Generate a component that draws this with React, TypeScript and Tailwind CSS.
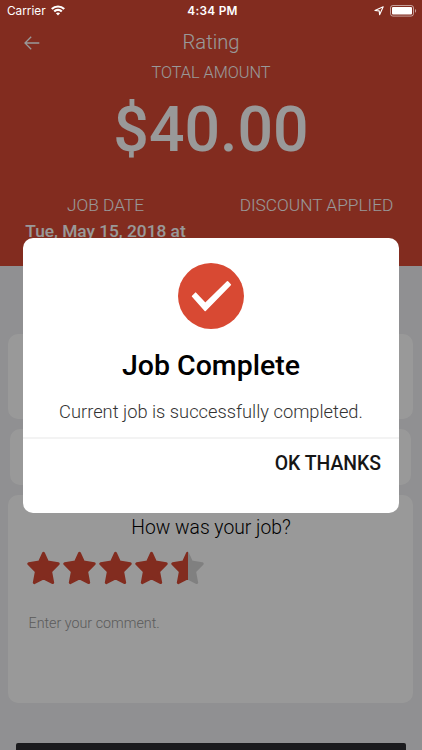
const STAR =
  "M16.5 2.2 L20.6 11 L31.3 12.7 L23.7 20.6 L25.8 31.7 L16.5 27 L7.2 31.7 L9.3 20.6 L1.7 12.7 L12.4 11 Z";

function Star({ fill }: { fill: "full" | "half" }) {
  return (
    <svg width="33" height="34" viewBox="0 0 33 34" className="shrink-0">
      <defs>
        <linearGradient id="half-star" gradientUnits="userSpaceOnUse" x1="0" y1="0" x2="33" y2="0">
          <stop offset="0.5" stopColor="#d94a35" />
          <stop offset="0.5" stopColor="#d6d6d6" />
        </linearGradient>
      </defs>
      <path
        d={STAR}
        fill={fill === "full" ? "#d94a35" : "url(#half-star)"}
        stroke={fill === "full" ? "#d94a35" : "url(#half-star)"}
        strokeWidth="2.8"
        strokeLinejoin="round"
      />
    </svg>
  );
}

function StatusBar() {
  return (
    <div className="absolute inset-x-0 top-0 z-20 grid h-[22px] grid-cols-3 items-center text-white">
      <div className="flex items-center gap-[5px] pt-px pl-[7px] font-['Inter','Liberation_Sans',sans-serif] text-[11.8px]">
        <span>Carrier</span>
        <svg width="14" height="11" viewBox="0 0 14 11" className="-mt-[2px]" fill="none" stroke="white" strokeWidth="2.2">
          <path d="M0.8 4.1 C4.2 0.6 9.8 0.6 13.2 4.1" />
          <path d="M3.2 6.5 C5.3 4.4 8.7 4.4 10.8 6.5" />
          <path d="M4.9 8.2 C6.1 7.1 7.9 7.1 9.1 8.2 L7 10.4 Z" fill="white" stroke="none" />
        </svg>
      </div>
      <div className="pt-px pl-[3px] text-center font-['Inter','Liberation_Sans',sans-serif] text-[11.8px] font-semibold tracking-[0.3px] whitespace-nowrap">
        4:34 PM
      </div>
      <div className="flex items-center justify-end gap-[6px] pr-[5px]">
        <svg width="10" height="10" viewBox="0 0 10 10" fill="none" stroke="white" strokeWidth="1.1" strokeLinejoin="round">
          <path d="M9.2 0.7 L5.6 8.8 L5.2 4.9 L0.9 4.5 Z" />
        </svg>
        <svg width="27" height="12" viewBox="0 0 27 12">
          <rect x="0.5" y="0.5" width="23" height="10.6" rx="2.4" fill="none" stroke="white" strokeOpacity="0.55" />
          <rect x="2" y="2" width="20" height="7.6" rx="1" fill="white" />
          <path d="M25 4 C26.5 4.5 26.5 7.2 25 7.7 Z" fill="white" fillOpacity="0.55" />
        </svg>
      </div>
    </div>
  );
}

function Header() {
  return (
    <header className="flex h-[266px] shrink-0 flex-col bg-[#d94a35] pt-[22px] text-white">
      <div className="grid h-[41px] grid-cols-[1fr_auto_1fr] items-center">
        <svg width="16" height="14" viewBox="0 0 16 14" className="ml-[24px]" fill="none" stroke="white" strokeWidth="1.3">
          <path d="M15.3 7 H1 M7.2 0.8 L1 7 L7.2 13.2" />
        </svg>
        <h1 className="text-[20.2px] leading-[41px] font-light">Rating</h1>
      </div>
      <p className="h-[19px] text-center text-[16.3px] leading-[19px] font-light">TOTAL AMOUNT</p>
      <p className="h-[95px] text-center text-[62.6px] leading-[95px] font-medium">$40.00</p>
      <div className="mt-[18px] grid grid-cols-2 text-center">
        <div>
          <p className="h-5 text-[17.3px] leading-5 font-light">JOB DATE</p>
          <p className="mt-[6px] h-5 text-[17.3px] leading-5 font-medium">Tue, May 15, 2018 at</p>
        </div>
        <p className="h-5 text-[17.3px] leading-5 font-light">DISCOUNT APPLIED</p>
      </div>
    </header>
  );
}

function ReviewCard() {
  return (
    <section className="mt-[10px] ml-2 h-[208px] w-[405px] shrink-0 rounded-[10px] bg-white pt-[21px]">
      <h2 className="h-6 pl-px text-center text-[19.3px] leading-6 font-light text-black">How was your job?</h2>
      <div className="mt-[11px] ml-[19px] flex gap-[3px]">
        <Star fill="full" />
        <Star fill="full" />
        <Star fill="full" />
        <Star fill="full" />
        <Star fill="half" />
      </div>
      <p className="mt-[28px] ml-[20.5px] h-5 text-[14.3px] leading-5 font-light text-[#999]">Enter your comment.</p>
    </section>
  );
}

function CompleteDialog() {
  return (
    <div className="absolute inset-0 z-10 flex items-center justify-center bg-black/40">
      <div role="dialog" className="flex h-[275px] w-[376px] flex-col rounded-[10px] bg-white">
        <svg width="66" height="66" viewBox="0 0 66 66" className="mt-[25.5px] self-center">
          <circle cx="33" cy="33" r="33" fill="#d84933" />
          <path
            d="M14.6 33.2 L17.6 30.2 L27.3 40.5 L49.5 18.8 L52.3 21.8 L27.2 47.4 Z"
            fill="white"
            stroke="white"
            strokeWidth="1.6"
            strokeLinejoin="round"
          />
        </svg>
        <h2 className="mt-[21px] h-[32px] text-center text-[28.5px] leading-[32px] font-medium text-black">Job Complete</h2>
        <p className="mt-[18px] h-6 text-center text-[18.3px] leading-6 font-light text-[#333]">
          Current job is successfully completed.
        </p>
        <div className="mt-[12.5px] border-t-2 border-[#f3f3f3] pt-[13px] pr-[18px] text-right">
          <button className="h-6 text-[19.4px] leading-6 font-medium text-[#161616]">OK THANKS</button>
        </div>
      </div>
    </div>
  );
}

export default function App() {
  return (
    <main className="relative flex h-[750px] w-[422px] flex-col overflow-hidden bg-[#f0f0f3] font-['Roboto',sans-serif] whitespace-nowrap">
      <Header />
      <section className="mt-[68px] ml-2 h-[85px] w-[405px] shrink-0 rounded-[10px] bg-white" />
      <section className="mt-[10px] ml-[10px] h-[56px] w-[401px] shrink-0 rounded-[10px] bg-white" />
      <ReviewCard />
      <div className="mt-[40px] ml-4 h-[50px] w-[390px] shrink-0 rounded-[2px] bg-[#2d2e32]" />
      <CompleteDialog />
      <StatusBar />
    </main>
  );
}
